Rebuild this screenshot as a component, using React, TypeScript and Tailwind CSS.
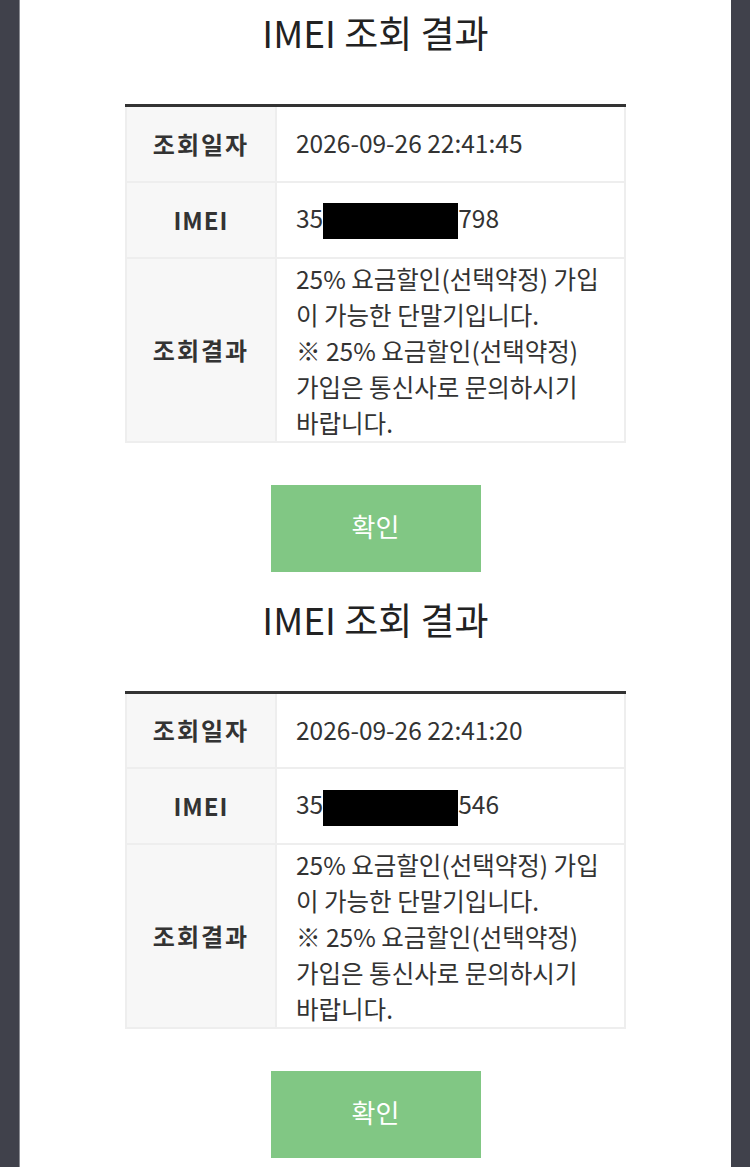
import React from 'react';

interface ResultProps {
  date: string;
  imeiHead: string;
  imeiTail: string;
}

const ResultBlock: React.FC<ResultProps> = ({ date, imeiHead, imeiTail }) => {
  return (
    <section className="pt-[5px] pb-[15px]">
      <h2 className="text-center text-[37px] leading-[54px] text-[#222]">IMEI 조회 결과</h2>

      <table className="mt-[45px] mx-auto w-[501px] border-collapse border-t-[3px] border-t-[#333] table-fixed">
        <tbody>
          <tr className="h-[76px]">
            <th className="w-[150px] bg-[#f7f7f7] border-2 border-[#eee] font-bold text-[24px] tracking-[2px] text-[#333]">
              조회일자
            </th>
            <td className="border-2 border-[#eee] pl-[19px] pr-[20px] text-[24.5px] text-[#333]">{date}</td>
          </tr>
          <tr className="h-[76px]">
            <th className="bg-[#f7f7f7] border-2 border-[#eee] font-bold text-[24px] tracking-[1px] text-[#333]">
              IMEI
            </th>
            <td className="border-2 border-[#eee] pl-[19px] pr-[20px] text-[24.5px] text-[#333]">
              {imeiHead}
              <span className="inline-block align-middle w-[135px] h-[36px] bg-black"></span>
              {imeiTail}
            </td>
          </tr>
          <tr>
            <th className="bg-[#f7f7f7] border-2 border-[#eee] font-bold text-[24px] tracking-[2px] text-[#333]">
              조회결과
            </th>
            <td className="border-2 border-[#eee] pl-[19px] pr-[21px] pt-[2px] text-[24.5px] leading-[36px] text-[#333]">
              25% 요금할인(선택약정) 가입이 가능한 단말기입니다.
              <br />※ 25% 요금할인(선택약정) 가입은 통신사로 문의하시기 바랍니다.
            </td>
          </tr>
        </tbody>
      </table>

      <button className="block mx-auto mt-[42px] w-[210px] h-[87px] pb-[6px] bg-[#81c784] text-white text-[26px]">
        확인
      </button>
    </section>
  );
};

export default function App() {
  return (
    <div className="min-h-screen bg-[#40414b] px-[19px] font-['Noto_Sans_CJK_KR','Noto_Sans',sans-serif]">
      <div className="min-h-screen bg-white border-l border-[#8a8b92]">
        <ResultBlock date="2026-09-26 22:41:45" imeiHead="35" imeiTail="798" />
        <ResultBlock date="2026-09-26 22:41:20" imeiHead="35" imeiTail="546" />
      </div>
    </div>
  );
}
